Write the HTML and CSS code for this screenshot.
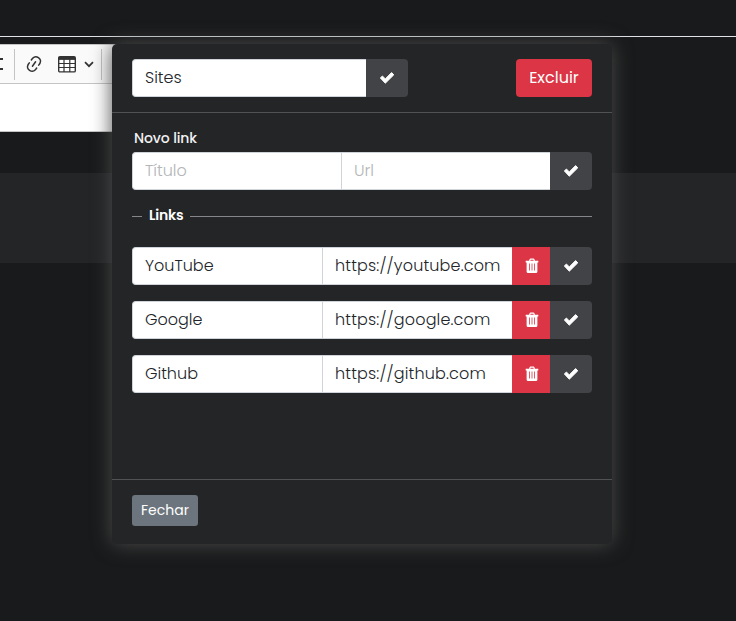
FILE: index.html
```html
<!DOCTYPE html>
<html lang="pt-BR">
<head>
<meta charset="utf-8">
<title>Sites</title>
<link rel="stylesheet" href="styles.css">
</head>
<body>
<svg class="defs" aria-hidden="true">
  <symbol id="check" viewBox="0 0 16 14"><path d="M1.4 7 3.4 5 6.3 7.9 12.6 1.6 14.8 3.8 6.3 12.2Z" stroke-width="1" stroke-linejoin="round" stroke="currentColor" fill="currentColor"/></symbol>
  <symbol id="trash" viewBox="0 0 14 16"><path fill="currentColor" fill-rule="evenodd" d="M4 2.7 4.6 1.2Q4.9.6 5.5.6H8.5Q9.1.6 9.4 1.2L10 2.7H13.3V4.4H12.4V13.4Q12.4 15 11 15H3Q1.6 15 1.6 13.4V4.4H.7V2.7ZM5.3 2.7H8.7L8.3 1.7H5.7ZM4 5.6V12.5H4.8V5.6ZM6.6 5.6V12.5H7.4V5.6ZM9.2 5.6V12.5H10V5.6Z"/></symbol>
</svg>
<div class="page">
  <header class="topbar"></header>
  <div class="editor">
    <div class="toolbar">
      <svg class="list" viewBox="0 0 4 14"><path d="M0 2H3M0 12H3" stroke="#333" stroke-width="1.8"/></svg>
      <i class="sep"></i>
      <svg class="link" viewBox="0 0 20 20"><path fill="#333" d="m11.077 15 .991-1.416a.75.75 0 1 1 1.229.86l-1.148 1.64a.748.748 0 0 1-.217.206 5.251 5.251 0 0 1-8.503-5.955.741.741 0 0 1 .12-.274l1.147-1.639a.75.75 0 1 1 1.228.86L4.933 10.7l.006.003a3.75 3.75 0 0 0 6.132 4.294l.006.004zm5.494-5.335a.748.748 0 0 1-.12.274l-1.147 1.639a.75.75 0 1 1-1.228-.86l.86-1.23a3.75 3.75 0 0 0-6.144-4.301l-.86 1.229a.75.75 0 0 1-1.229-.86l1.148-1.64a.748.748 0 0 1 .217-.206 5.251 5.251 0 0 1 8.503 5.955zm-4.563-2.532a.75.75 0 0 1 .184 1.045l-3.155 4.505a.75.75 0 1 1-1.229-.86l3.155-4.506a.75.75 0 0 1 1.045-.184z"/></svg>
      <svg class="table" viewBox="0 0 18 17"><rect x=".7" y=".7" width="16.6" height="15.2" rx="1.2" fill="#fff" stroke="#333" stroke-width="1.4"/><path d="M1 2.4H17" stroke="#333" stroke-width="3"/><path d="M1 7.5H17M1 11.5H17M6 3V16M11.8 3V16" stroke="#333" stroke-width="1.2"/></svg>
      <svg class="chevron" viewBox="0 0 10 7"><path d="M1 1.2 5 5.2 9 1.2" fill="none" stroke="#333" stroke-width="1.7"/></svg>
      <i class="sep sep-end"></i>
    </div>
  </div>
  <div class="band"></div>
</div>

<section class="modal">
  <div class="modal-header">
    <div class="group name-group">
      <input class="field" value="Sites">
      <button class="btn save"><svg><use href="#check"/></svg></button>
    </div>
    <button class="btn danger">Excluir</button>
  </div>
  <div class="modal-body">
    <label class="label">Novo link</label>
    <div class="group">
      <input class="field" placeholder="Título">
      <input class="field" placeholder="Url">
      <button class="btn save"><svg><use href="#check"/></svg></button>
    </div>
    <div class="divider"><span>Links</span></div>
    <div class="group row">
      <input class="field" value="YouTube">
      <input class="field address" value="https://youtube.com">
      <button class="btn remove"><svg><use href="#trash"/></svg></button>
      <button class="btn save"><svg><use href="#check"/></svg></button>
    </div>
    <div class="group row">
      <input class="field" value="Google">
      <input class="field address" value="https://google.com">
      <button class="btn remove"><svg><use href="#trash"/></svg></button>
      <button class="btn save"><svg><use href="#check"/></svg></button>
    </div>
    <div class="group row">
      <input class="field" value="Github">
      <input class="field address" value="https://github.com">
      <button class="btn remove"><svg><use href="#trash"/></svg></button>
      <button class="btn save"><svg><use href="#check"/></svg></button>
    </div>
  </div>
  <div class="modal-footer"><button class="btn close">Fechar</button></div>
</section>
</body>
</html>
```
FILE: styles.css
```css
* { box-sizing: border-box; }
body { margin: 0; height: 621px; overflow: hidden; background: #191a1b; font-family: Poppins, Inter, sans-serif; }
.defs { position: absolute; width: 0; height: 0; }
.topbar { height: 37px; border-bottom: 1px solid #dee2e6; }
.editor { width: 500px; margin-top: 7px; height: 88px; background: #fff; border: 1px solid #c4c4c4; border-width: 1px 0; }
.toolbar { display: flex; align-items: center; height: 39px; background: #fafafa; border-bottom: 1px solid #c4c4c4; }
.toolbar svg { display: block; flex: none; }
.list { width: 4px; height: 14px; }
.sep { width: 1px; height: 31px; margin-left: 10px; background: #c4c4c4; }
.link { width: 20px; height: 20px; margin-left: 9px; }
.table { width: 18px; height: 17px; margin-left: 14px; }
.chevron { width: 10px; height: 7px; margin-left: 8px; }
.sep-end { margin-left: 7px; }
.band { margin-top: 41px; height: 90px; background: #242527; }

.modal { position: absolute; left: 112px; top: 44px; width: 500px; height: 500px; display: flex; flex-direction: column; background: #242527; border-radius: 5px; box-shadow: 0 0 20px #4b4b4b; }
.modal-header { display: flex; justify-content: space-between; padding: 15px 20px; height: 69px; border-bottom: 1px solid #505254; }
.modal-body { flex: 1; padding: 16px 20px 0; }
.modal-footer { height: 65px; padding: 15px 20px; border-top: 1px solid #505254; }
.group { display: flex; height: 38px; }
.name-group { width: 276px; }
.row { margin-bottom: 16px; }
.field { flex: 1 1 0; min-width: 0; height: 38px; padding: 0 0 1px 12px; border: 1px solid #ced4da; border-right: 0; background: #fff; color: #212529; font: 300 16px Poppins, Inter, sans-serif; outline: 0; }
.field:first-child { border-radius: 4px 0 0 4px; }
.field::placeholder { color: #b3b5b8; opacity: 1; }
.address { letter-spacing: .16px; }
.btn { display: flex; align-items: center; justify-content: center; margin: 0; padding: 0; border: 0; height: 38px; color: #fff; font: 400 16px Poppins, Inter, sans-serif; }
.btn svg { display: block; width: 16px; height: 14px; }
.save { width: 42px; border-radius: 0 4px 4px 0; background: #424346; }
.danger { width: 76px; padding-bottom: 2px; border-radius: 4px; background: #dc3545; }
.remove { width: 38px; background: #dc3545; }
.btn.remove svg { width: 14px; height: 16px; margin-left: 1px; }
.label { display: block; height: 23px; padding-left: 2px; color: #f1f1f1; font-size: 14px; line-height: 18px; font-weight: 500; letter-spacing: -.1px; }
.divider { display: flex; align-items: center; gap: 7px; height: 20px; margin: 16px 0 21px; color: #fff; font-size: 14px; font-weight: 600; letter-spacing: -.2px; }
.divider span { padding-bottom: 2px; }
.divider::before { content: ""; width: 10px; height: 1px; background: #85868a; }
.divider::after { content: ""; flex: 1; height: 1px; background: #85868a; }
.close { width: 66px; height: 31px; border-radius: 3px; background: #6c757d; font-size: 14px; }
```
